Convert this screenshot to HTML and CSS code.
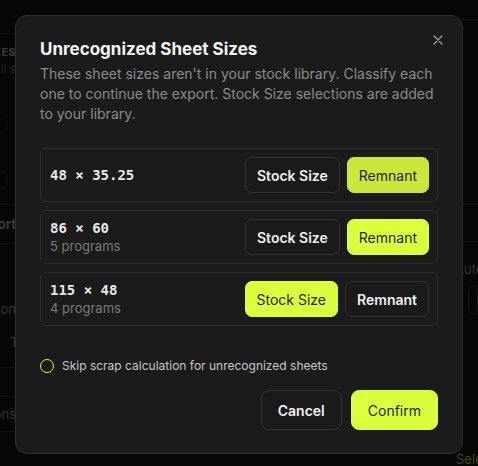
FILE: index.html
```html
<!DOCTYPE html>
<html lang="en">
<head>
    <meta charset="UTF-8" />
    <meta name="viewport" content="width=device-width, initial-scale=1.0"/>
    <title>Export - Sheet Sizes</title>
    <link rel="stylesheet" href="styles.css">
</head>
<body>
    <div class="app">
        <aside class="sidebar">
            <div class="sb-top"></div>
            <div class="sb-row sb-heading">SIZES</div>
            <div class="sb-row sb-sub">Overall s</div>
            <div class="sb-row sb-avatar"><span class="ring"></span></div>
            <div class="sb-row sb-avatar"><span class="ring"></span></div>
            <div class="sb-row sb-section">Export</div>
            <div class="sb-row sb-item sb-item-first">Position</div>
            <div class="sb-row sb-item sb-clip">Time</div>
            <div class="sb-rule"></div>
            <div class="sb-row sb-item sb-last">Options</div>
        </aside>
        <main class="workspace"></main>
        <aside class="inspector">
            <div class="in-top"></div>
            <div class="in-band"></div>
            <div class="in-label">Auto</div>
            <div class="in-field"></div>
            <div class="in-spacer"></div>
            <div class="in-link">Select</div>
        </aside>
    </div>

    <div class="modal-backdrop">
        <div class="modal" role="dialog">
            <button class="modal-close" aria-label="Close">
                <svg width="10" height="10" viewBox="0 0 10 10"><path d="M1 1 9 9M9 1 1 9" stroke="currentColor" stroke-width="1.4" stroke-linecap="round"/></svg>
            </button>
            <h2 class="modal-title">Unrecognized Sheet Sizes</h2>
            <p class="modal-desc">These sheet sizes aren't in your stock library. Classify each one to continue the export. Stock Size selections are added to your library.</p>

            <div class="sheet-list">
                <div class="sheet-row">
                    <div class="sheet-info">
                        <div class="sheet-size">48 × 35.25</div>
                    </div>
                    <div class="choice">
                        <button class="choice-btn">Stock Size</button>
                        <button class="choice-btn is-active is-hover">Remnant</button>
                    </div>
                </div>
                <div class="sheet-row">
                    <div class="sheet-info">
                        <div class="sheet-size">86 × 60</div>
                        <div class="sheet-meta">5 programs</div>
                    </div>
                    <div class="choice">
                        <button class="choice-btn">Stock Size</button>
                        <button class="choice-btn is-active">Remnant</button>
                    </div>
                </div>
                <div class="sheet-row">
                    <div class="sheet-info">
                        <div class="sheet-size">115 × 48</div>
                        <div class="sheet-meta">4 programs</div>
                    </div>
                    <div class="choice">
                        <button class="choice-btn is-active">Stock Size</button>
                        <button class="choice-btn">Remnant</button>
                    </div>
                </div>
            </div>

            <label class="skip-option">
                <span class="check"></span>
                Skip scrap calculation for unrecognized sheets
            </label>

            <div class="modal-actions">
                <button class="btn btn-ghost">Cancel</button>
                <button class="btn btn-primary">Confirm</button>
            </div>
        </div>
    </div>
</body>
</html>
```

FILE: styles.css
```css
* { box-sizing: border-box; }

body {
    font-family: Inter, "Noto Sans", sans-serif;
    margin: 0; padding: 0;
    background: #060606; color: #eee;
    height: 466px; overflow: hidden;
}

/* page behind the dialog */
.app {
    display: flex; height: 100vh;
}
.sidebar {
    width: 16px; overflow: hidden;
    display: flex; flex-direction: column;
}
.workspace { flex: 1; }
.inspector {
    width: 23px; overflow: hidden;
    display: flex; flex-direction: column;
}

.sb-top {
    height: 34px; flex-shrink: 0;
    border-bottom: 1px solid #141414;
}
.sb-row {
    display: flex; justify-content: flex-end;
    white-space: nowrap;
}
.sb-heading {
    margin-top: 10px;
    font-size: 11px; font-weight: 700; line-height: 16px;
    color: #3a3a3a; letter-spacing: 0.03em;
}
.sb-sub {
    margin-top: 1px;
    font-size: 12px; line-height: 16px; color: #262626;
}
.sb-avatar { margin-top: 34px; padding-right: 8px; }
.sb-avatar + .sb-avatar { margin-top: 33px; }
.ring {
    width: 24px; height: 24px; flex-shrink: 0;
    border: 1px solid #121212; border-radius: 50%;
}
.sb-section {
    margin-top: 12px; padding: 14px 0;
    border-top: 1px solid #141414; border-bottom: 1px solid #141414;
    font-size: 13px; font-weight: 700; line-height: 10px; color: #3a3a3a;
}
.sb-item {
    font-size: 13px; line-height: 18px; color: #343434;
}
.sb-item-first { margin-top: 56px; }
.sb-clip {
    justify-content: flex-start;
    padding-left: 10px; margin-top: 15px;
}
.sb-rule {
    height: 30px; margin-top: 16px;
    border-top: 1px solid #141414; border-bottom: 1px solid #141414;
}
.sb-last {
    margin-top: 8px; padding-bottom: 8px;
    border-bottom: 1px solid #141414;
}

.in-top {
    height: 20px; flex-shrink: 0;
    border-bottom: 1px solid #141414;
}
.in-band {
    height: 38px; margin-top: 184px;
    border-top: 1px solid #141414; border-bottom: 1px solid #141414;
}
.in-label {
    margin-top: 18px;
    font-size: 13px; line-height: 18px; color: #343434;
}
.in-field {
    height: 28px; margin: 8px 0 0 13px;
    border: 1px solid #181818; border-radius: 6px;
}
.in-spacer { flex: 1; }
.in-link {
    padding: 0 0 0 1px; margin-bottom: -2px;
    font-size: 13px; line-height: 18px; color: #3f4a0e;
}

/* dialog */
.modal-backdrop {
    position: fixed; inset: 0;
    display: flex; align-items: center; justify-content: center;
    padding-top: 3px;
}
.modal {
    position: relative;
    width: 448px;
    background: #1b1b1b;
    border: 1px solid #2e2e2e; border-radius: 12px;
    padding: 22px 24px 23px;
}
.modal-close {
    position: absolute; top: 14px; right: 14px;
    width: 20px; height: 20px; padding: 0;
    display: flex; align-items: center; justify-content: center;
    background: none; border: 0; color: #9a9a9a; cursor: pointer;
}
.modal-title {
    margin: 0 0 4px;
    font-size: 17px; line-height: 22px; font-weight: 700;
    color: #f5f5f5;
}
.modal-desc {
    margin: 0;
    font-size: 14px; line-height: 20px; color: #8b8b8b;
}

.sheet-list {
    display: flex; flex-direction: column; gap: 8px;
    margin-top: 24px;
}
.sheet-row {
    display: flex; align-items: center; gap: 8px;
    border: 1px solid #2c2c2c; border-radius: 6px;
    padding: 8px;
}
.sheet-info { flex: 1; padding-left: 1px; }
.sheet-size {
    font-family: "DejaVu Sans Mono", "Liberation Mono", monospace;
    font-size: 14px; font-weight: 700; line-height: 18px;
    color: #e8e8e8;
}
.sheet-meta {
    font-size: 13px; line-height: 18px; color: #7a7a7a;
}

.choice { display: flex; gap: 7px; }
.choice-btn {
    height: 36px; padding: 0 11px;
    border: 1px solid #333; border-radius: 7px;
    background: #1a1a1a; color: #f0f0f0;
    font-family: inherit; font-size: 14px; font-weight: 600;
    cursor: pointer;
}
.choice-btn.is-active {
    background: #d9ff3d; border-color: #d9ff3d;
    color: #1f1f1f; font-weight: 400;
}
.choice-btn.is-hover {
    background: #c9e83a; border-color: #c9e83a;
}

.skip-option {
    display: flex; align-items: center; gap: 8px;
    margin-top: 30px;
    font-size: 12px; line-height: 20px; color: #c8c8c8;
}
.check {
    width: 14px; height: 14px; flex-shrink: 0;
    border: 1.5px solid #d4f53c; border-radius: 50%;
}

.modal-actions {
    display: flex; justify-content: flex-end; gap: 9px;
    margin-top: 14px;
}
.btn {
    height: 40px; padding: 0 16px;
    border-radius: 8px;
    font-family: inherit; font-size: 14px; font-weight: 600;
    cursor: pointer;
}
.btn-ghost {
    background: #1a1a1a; border: 1px solid #333; color: #f0f0f0;
}
.btn-primary {
    background: #d9ff3d; border: 1px solid #d9ff3d;
    color: #1f1f1f; font-weight: 400;
}
```
